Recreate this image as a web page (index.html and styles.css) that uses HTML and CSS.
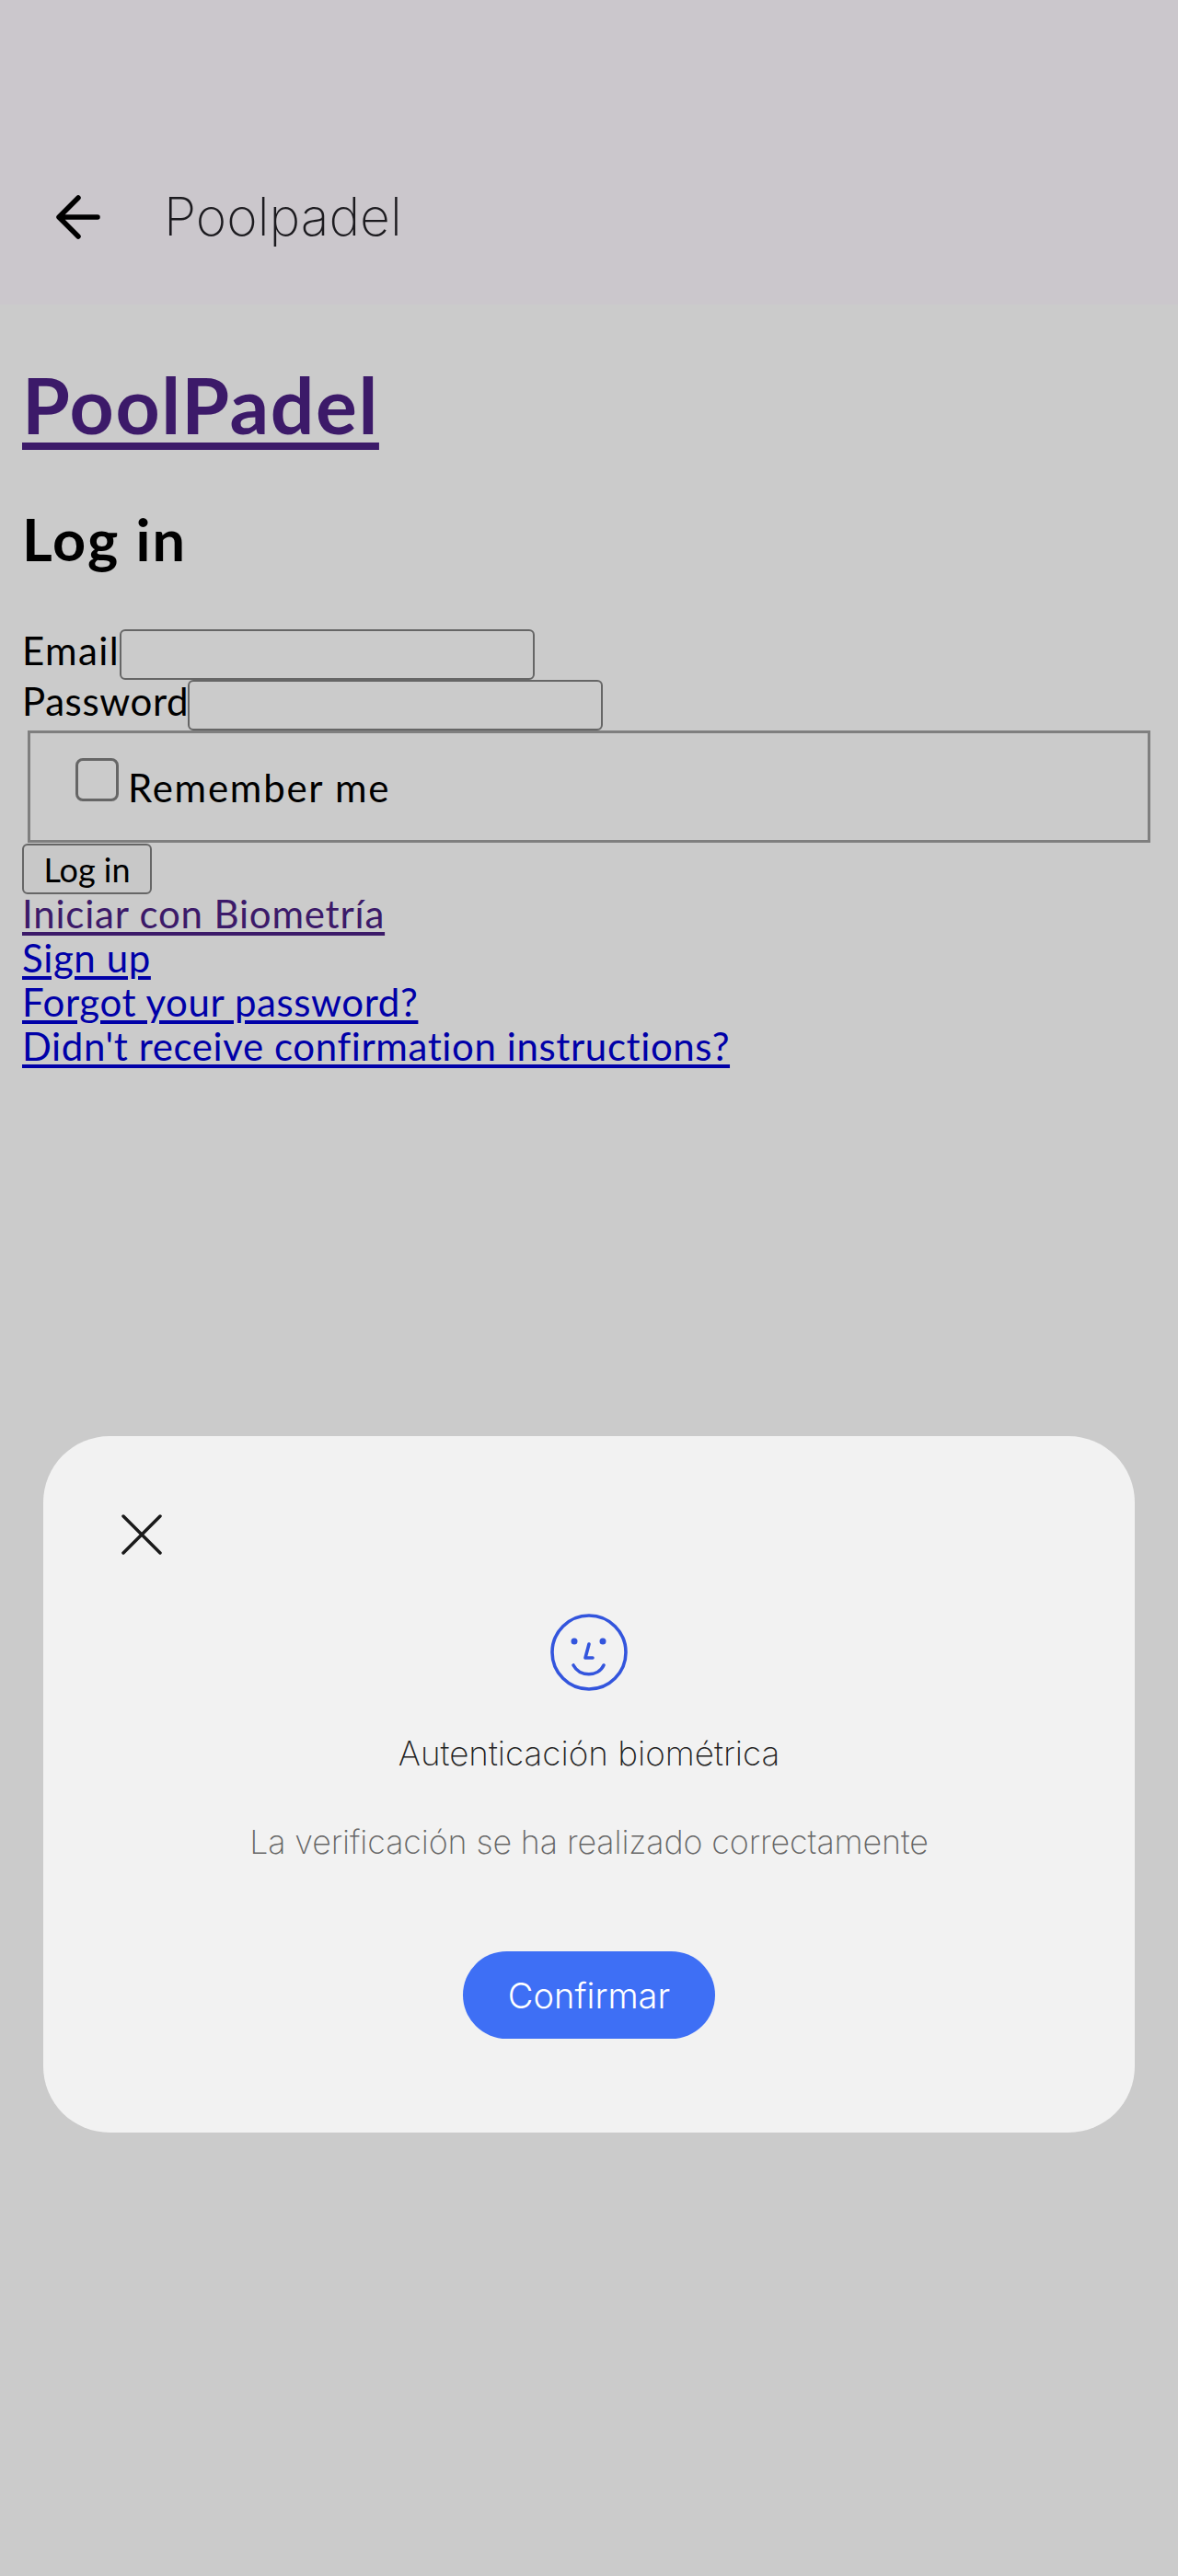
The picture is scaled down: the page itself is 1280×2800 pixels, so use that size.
FILE: index.html
```html
<!DOCTYPE html>
<html lang="en">
<head>
    <meta charset="UTF-8">
    <meta name="viewport" content="width=device-width, initial-scale=1.0">
    <title>Poolpadel</title>
    <link rel="stylesheet" href="styles.css">
</head>
<body>
    <div class="app-bar">
        <svg class="back-icon" width="50" height="48" viewBox="0 0 50 48" fill="none">
            <path d="M5 24H46M25 3L4 24L25 45" />
        </svg>
        <span class="app-title">Poolpadel</span>
    </div>

    <div class="content">
        <h1><a href="#">PoolPadel</a></h1>
        <h2>Log in</h2>
        <form>
            <div class="field field-email">
                <label>Email</label><input type="email">
            </div>
            <div class="field field-password">
                <label>Password</label><input type="password">
            </div>
            <fieldset class="remember">
                <input type="checkbox" id="remember"><label for="remember">Remember me</label>
            </fieldset>
            <button type="button" class="submit">Log in</button>
        </form>
        <div class="links">
            <a href="#" class="visited">Iniciar con Biometría</a>
            <a href="#">Sign up</a>
            <a href="#">Forgot your password?</a>
            <a href="#">Didn't receive confirmation instructions?</a>
        </div>
    </div>

    <div class="dialog">
        <svg class="close-icon" width="44" height="44" viewBox="0 0 44 44" fill="none">
            <path d="M2 2L42 42M42 2L2 42" />
        </svg>
        <svg class="face-icon" width="84" height="84" viewBox="0 0 84 84" fill="none">
            <circle cx="42" cy="42" r="40" />
            <circle class="eye" cx="26" cy="30" r="3.5" />
            <circle class="eye" cx="57" cy="30" r="3.5" />
            <path d="M42 33L38 48H46" />
            <path d="M25 56C32 69 52 69 58 56" />
        </svg>
        <div class="dialog-title">Autenticación biométrica</div>
        <div class="dialog-text">La verificación se ha realizado correctamente</div>
        <button type="button" class="confirm">Confirmar</button>
    </div>
</body>
</html>
```

FILE: styles.css
```css
* {
    box-sizing: border-box;
}

body {
    margin: 0;
    min-height: 2800px;
    position: relative;
    background: #cbcbcb;
    color: #000;
    font-family: 'Lato', sans-serif;
    font-size: 42px;
    line-height: 48px;
    font-variant-ligatures: none;
}

.app-bar {
    height: 331px;
    padding: 140px 0 0 60px;
    display: flex;
    align-items: center;
    background: #cbc7cc;
}

.back-icon {
    stroke: #000;
    stroke-width: 5.5;
    stroke-linecap: round;
    stroke-linejoin: round;
}

.app-title {
    margin-left: 68px;
    font-family: 'Inter', sans-serif;
    font-size: 57px;
    font-weight: 200;
    color: #1c1b1f;
}

.content {
    padding: 0 24px;
}

h1 {
    margin: 61px 0 0;
    font-size: 84px;
    line-height: 96px;
    letter-spacing: 1.6px;
}

h1 a {
    color: #3c1a69;
    text-decoration-thickness: 8px;
    text-underline-offset: 9px;
}

h2 {
    margin: 62px 0 62px;
    font-size: 63px;
    line-height: 72px;
    letter-spacing: 2px;
}

.field {
    display: flex;
    align-items: flex-start;
    height: 55px;
}

.field label {
    margin-top: -1px;
    line-height: 48px;
    letter-spacing: 0.6px;
}

.field-email label {
    width: 106px;
    letter-spacing: 1.4px;
}

.field-password label {
    width: 180px;
}

.field input {
    width: 451px;
    height: 55px;
    background: #cbcbcb;
    border: 2px solid #666;
    border-radius: 6px;
}

.remember {
    margin: 0 6px 1px;
    padding: 27px 49px;
    height: 122px;
    display: flex;
    align-items: flex-start;
    border: 3px solid #7f7f7f;
}

.remember input {
    width: 47px;
    height: 47px;
    margin: 0 10px 0 0;
    appearance: none;
    background: transparent;
    border: 3px solid #666;
    border-radius: 8px;
}

.remember label {
    margin-top: 8px;
    letter-spacing: 1.75px;
}

.submit {
    display: block;
    width: 141px;
    height: 55px;
    padding: 0;
    font-family: inherit;
    font-size: 36px;
    color: #000;
    background: #c8c8c8;
    border: 2px solid #666;
    border-radius: 6px;
}

.links {
    margin-top: -3px;
}

.links a {
    display: block;
    width: fit-content;
    color: #0000a8;
    letter-spacing: 0.6px;
    text-decoration-thickness: 4px;
    text-underline-offset: 4px;
}

.links a.visited {
    color: #3c1a69;
    letter-spacing: 0.8px;
}

.dialog {
    position: absolute;
    left: 47px;
    right: 47px;
    top: 1561px;
    height: 757px;
    padding: 85px 85px 0;
    display: flex;
    flex-direction: column;
    align-items: center;
    background: #f2f2f2;
    border-radius: 72px;
    font-family: 'Inter', sans-serif;
    font-weight: 300;
}

.close-icon {
    align-self: flex-start;
    stroke: #1a1a1a;
    stroke-width: 3.5;
    stroke-linecap: round;
}

.face-icon {
    margin-top: 64px;
    stroke: #3355dd;
    stroke-width: 3.6;
    stroke-linecap: round;
    stroke-linejoin: round;
}

.face-icon .eye {
    fill: #3355dd;
    stroke: none;
}

.dialog-title {
    margin-top: 44px;
    font-size: 36.8px;
    font-weight: 200;
    color: #222;
}

.dialog-text {
    margin-top: 48px;
    font-size: 35.8px;
    font-weight: 200;
    letter-spacing: -0.1px;
    color: #666;
}

.confirm {
    margin-top: 95px;
    width: 274px;
    height: 95px;
    font-family: inherit;
    font-weight: 300;
    font-size: 38px;
    color: #fff;
    background: #3e6ff5;
    border: none;
    border-radius: 48px;
}
```
